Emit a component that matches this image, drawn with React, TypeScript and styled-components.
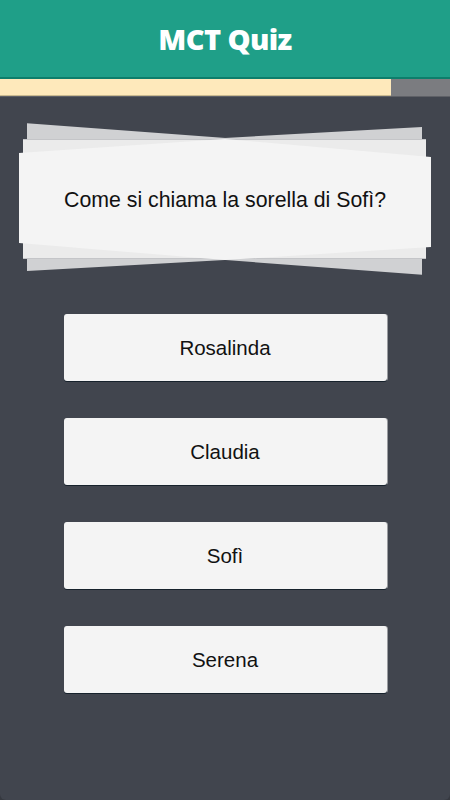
import { FunctionComponent } from 'react';
import styled, { createGlobalStyle } from 'styled-components';

const GlobalStyle = createGlobalStyle`
  html, body {
    margin: 0;
    padding: 0;
    background: #363940;
  }
  body {
    font-family: 'Liberation Sans', Arial, sans-serif;
  }
`;

const answers = ['Rosalinda', 'Claudia', 'Sofì', 'Serena'];
const progress = 391 / 450;

const App: FunctionComponent = () => {
  return (
    <Screen>
      <GlobalStyle />
      <Header>
        <Title>MCT Quiz</Title>
      </Header>
      <ProgressTrack>
        <ProgressFill style={{ width: `${progress * 100}%` }} />
      </ProgressTrack>
      <Body>
        <QuestionStack>
          <BackSheet $skew={4.3} />
          <BackSheet $skew={-3.2} />
          <MiddleSheet />
          <FrontSheet />
          <Question>Come si chiama la sorella di Sofì?</Question>
        </QuestionStack>
        <AnswerList>
          {answers.map((a) => (
            <AnswerButton key={a}>{a}</AnswerButton>
          ))}
        </AnswerList>
      </Body>
    </Screen>
  );
};

export default App;

const Screen = styled.div`
  width: 450px;
  height: 800px;
  display: flex;
  flex-direction: column;
  overflow: hidden;
`;

const Header = styled.header`
  height: 77px;
  background: #1f9f88;
  border-bottom: 2px solid #0d7e6b;
  display: flex;
  align-items: center;
  justify-content: center;
`;

const Title = styled.h1`
  margin: 0;
  font-family: 'Open Sans', sans-serif;
  font-weight: 800;
  font-size: 29px;
  letter-spacing: -0.6px;
  color: #ffffff;
`;

const ProgressTrack = styled.div`
  height: 17px;
  background: #7b7c80;
  border-bottom: 1px solid #5e6066;
`;

const ProgressFill = styled.div`
  height: 100%;
  background: #fee9bb;
  box-shadow: inset 0 -1px 0 #c9b98f;
`;

const Body = styled.main`
  flex: 1;
  background: #41454e;
  border-radius: 0 0 6px 6px;
  display: flex;
  flex-direction: column;
  align-items: center;
  padding-top: 26px;
`;

const QuestionStack = styled.div`
  position: relative;
  width: 412px;
  height: 154px;
  display: flex;
  align-items: center;
  justify-content: center;
`;

const BackSheet = styled.div<{ $skew: number }>`
  position: absolute;
  left: 8px;
  top: 15px;
  width: 395px;
  height: 122px;
  background: #d0d1d3;
  transform: skewY(${(p) => p.$skew}deg);
`;

const MiddleSheet = styled.div`
  position: absolute;
  left: 4px;
  top: 17px;
  width: 403px;
  height: 118px;
  background: #ebebeb;
  box-shadow: 0 -1px 0 #c4c5c8, 0 1px 0 #c4c5c8;
`;

const FrontSheet = styled.div`
  position: absolute;
  left: 0;
  top: 16px;
  width: 412px;
  height: 121px;
  background: #f4f4f4;
  clip-path: polygon(0 14px, 50% 0, 100% 18px, 100% 108px, 50% 121px, 0 104px);
`;

const Question = styled.p`
  position: relative;
  margin: 0;
  font-size: 21.3px;
  color: #111111;
`;

const AnswerList = styled.div`
  display: flex;
  flex-direction: column;
  gap: 37px;
  margin-top: 37px;
`;

const AnswerButton = styled.button`
  width: 323px;
  height: 67px;
  border: none;
  border-radius: 3px;
  background: #f4f4f4;
  box-shadow: 0 1px 0 #17222c, 1px 0 0 #9a9ca0;
  font-family: 'Liberation Sans', Arial, sans-serif;
  font-size: 20.5px;
  color: #111111;
  padding: 0;
  cursor: pointer;
`;
